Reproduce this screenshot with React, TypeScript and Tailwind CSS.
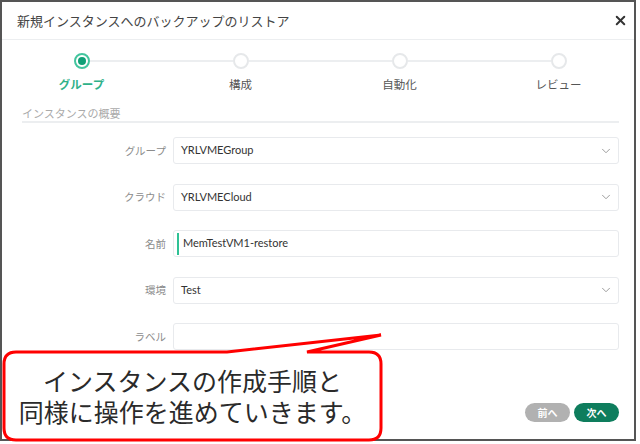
import { X, ChevronDown } from "lucide-react";

type Step = { label: string; active?: boolean };

const steps: Step[] = [
  { label: "グループ", active: true },
  { label: "構成" },
  { label: "自動化" },
  { label: "レビュー" },
];

type Field = { label: string; value: string; select?: boolean; focused?: boolean };

const fields: Field[] = [
  { label: "グループ", value: "YRLVMEGroup", select: true },
  { label: "クラウド", value: "YRLVMECloud", select: true },
  { label: "名前", value: "MemTestVM1-restore", focused: true },
  { label: "環境", value: "Test", select: true },
  { label: "ラベル", value: "" },
];

const StepItem = ({ step, first, last }: { step: Step; first: boolean; last: boolean }) => (
  <div className="flex w-[159px] shrink-0 flex-col items-center">
    <div className="flex w-full items-center">
      <div className={`h-[2px] flex-1 ${first ? "bg-transparent" : "bg-[#eceef0]"}`} />
      {step.active ? (
        <div className="flex h-[16px] w-[16px] items-center justify-center rounded-full border-2 border-[#43c59e] bg-white">
          <div className="h-[8px] w-[8px] rounded-full bg-[#10a077]" />
        </div>
      ) : (
        <div className="h-[16px] w-[16px] rounded-full border-2 border-[#e6e8ea] bg-white" />
      )}
      <div className={`h-[2px] flex-1 ${last ? "bg-transparent" : "bg-[#eceef0]"}`} />
    </div>
    <div
      className={`mt-[7px] text-[11.5px] leading-[16px] ${
        step.active ? "font-bold text-[#2fb189]" : "text-[#555]"
      }`}
    >
      {step.label}
    </div>
  </div>
);

const FieldRow = ({ field }: { field: Field }) => (
  <div className="flex h-[27px] items-center gap-[7px]">
    <div className="w-[144px] text-right text-[10.5px] text-[#8c8c8c]">{field.label}</div>
    <div className="flex h-full flex-1 items-center rounded-[3px] border border-[#e8eaed] bg-white pl-[7px] pr-[5px]">
      {field.focused && <div className="mr-[4px] h-[22px] w-[2px] -ml-[4px] bg-[#2fc195]" />}
      <span className="flex-1 font-['Lato','Noto_Sans',sans-serif] text-[11px] text-[#333]">{field.value}</span>
      {field.select && <ChevronDown size={14} strokeWidth={1.5} className="text-[#8f8f8f]" />}
    </div>
  </div>
);

const App = () => {
  return (
    <div className="relative h-[444px] w-[640px] overflow-hidden bg-white font-['Noto_Sans_CJK_JP','Noto_Sans',sans-serif]">
      {/* framed dialog screenshot */}
      <div className="flex h-[441px] w-[636px] flex-col overflow-hidden border-2 border-[#555] bg-white">
        <div className="flex h-[38px] shrink-0 items-center justify-between border-b border-[#eceef0] pl-[15px] pr-[6px]">
          <span className="text-[13px] text-[#444]">新規インスタンスへのバックアップのリストア</span>
          <X size={15} strokeWidth={3.2} className="text-[#333]" />
        </div>

        {/* stepper */}
        <div className="flex pt-[13px]">
          {steps.map((s, i) => (
            <StepItem key={s.label} step={s} first={i === 0} last={i === steps.length - 1} />
          ))}
        </div>

        <div className="flex flex-col pl-[20px] pr-[15px]">
          <div className="mt-[13px] border-b-2 border-[#eceef0] text-[11px] leading-[16px] text-[#aaa]">
            インスタンスの概要
          </div>

          <div className="mt-[14px] flex flex-col gap-[19.5px]">
            {fields.map((f) => (
              <FieldRow key={f.label} field={f} />
            ))}
          </div>

          <div className="mt-[53px] flex justify-end gap-[4px]">
            <button className="h-[19px] w-[45px] rounded-full bg-[#b1b1b1] text-[10px] font-bold text-white">
              前へ
            </button>
            <button className="h-[19px] w-[45px] rounded-full bg-[#0e7d5d] text-[10px] font-bold text-white">
              次へ
            </button>
          </div>
        </div>
      </div>

      {/* callout overlay */}
      <svg className="absolute left-0 top-0" width="640" height="444" viewBox="0 0 640 444">
        <path
          d="M16 352 H227 L381 335 L307 352 H369 Q381 352 381 364 V428 Q381 440 369 440 H16 Q4 440 4 428 V364 Q4 352 16 352 Z"
          fill="#ffffff"
          stroke="#ff0000"
          strokeWidth="3"
          strokeLinejoin="miter"
        />
      </svg>
      <div className="absolute left-[4px] top-[352px] flex h-[88px] w-[377px] flex-col items-center justify-center text-center text-[25px] font-normal leading-[31px] text-[#2a2a2a]">
        <div>インスタンスの作成手順と</div>
        <div>同様に操作を進めていきます。</div>
      </div>
    </div>
  );
};

export default App;
